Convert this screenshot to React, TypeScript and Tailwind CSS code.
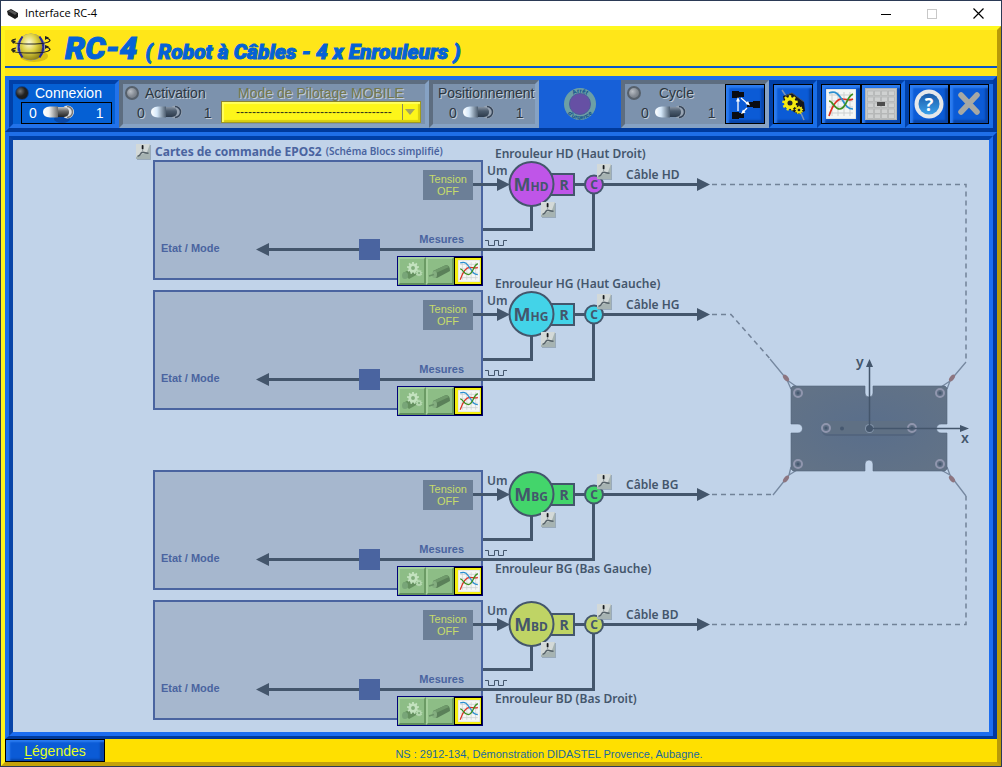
import React, { useState } from "react";

const INK = "#44566c";

type Winder = {
  code: "HD" | "HG" | "BG" | "BD";
  title: string;
  color: string;
  titleY: number;
  gap: string;
};

const winders: Winder[] = [
  { code: "HD", title: "Enrouleur HD (Haut Droit)", color: "#bf55e8", titleY: -2, gap: "" },
  { code: "HG", title: "Enrouleur HG (Haut Gauche)", color: "#43d3e8", titleY: -2, gap: "" },
  { code: "BG", title: "Enrouleur BG (Bas Gauche)", color: "#43d56b", titleY: 103, gap: "mt-[50px]" },
  { code: "BD", title: "Enrouleur BD (Bas Droit)", color: "#bfd465", titleY: 103, gap: "" },
];

function PdfIcon({ x, y }: { x: number; y: number }) {
  return (
    <g transform={`translate(${x} ${y})`}>
      <rect x="1" y="1" width="14" height="15" fill="#7f8f9d" opacity="0.6" />
      <rect width="14" height="15" fill="#d3d9d8" />
      <path d="M14 0V15H0V13L6 10L11 8Z" fill="#a6b3b2" />
      <path d="M6.600 1.800V4.500" stroke="#16191c" strokeWidth="1.800" strokeLinecap="round" />
      <path d="M6.600 5V7" stroke="#8c979b" strokeWidth="1" />
      <path d="M1.500 12.400Q4 11.500 5 9.200Q6 7.800 8 8.400Q10 9.200 12.500 9.200" stroke="#566269" strokeWidth="1.500" fill="none" />
    </g>
  );
}

function CurvesIcon({ size }: { size: number }) {
  return (
    <svg width={size} height={size} viewBox="0 0 30 30" aria-hidden="true">
      <rect width="30" height="30" fill="#f4f6f5" stroke="#d0d4d2" />
      <path d="M3 6H27M3 12H27M3 18H27M3 24H27M6 3V27M12 3V27M18 3V27M24 3V27" stroke="#cdd0cf" strokeWidth="1" />
      <path d="M3 27C6 18 10 9 17 10C21 10 23 12 27 10" stroke="#dd3022" strokeWidth="1.700" fill="none" />
      <path d="M3 4C10 1 13 6 17 12C20 17 22 20 27 20" stroke="#2a8fd0" strokeWidth="1.700" fill="none" />
      <path d="M3 12C7 12 8 20 14 20C21 19 20 8 27 5" stroke="#3c8f1f" strokeWidth="1.700" fill="none" />
    </svg>
  );
}

const gearTeeth = [0, 40, 80, 120, 160, 200, 240, 280, 320];

function Gear({ x, y, r, color, hole }: { x: number; y: number; r: number; color: string; hole: string }) {
  return (
    <g transform={`translate(${x} ${y})`}>
      {gearTeeth.map((a) => (
        <rect key={a} x={-r * 0.2} y={-r * 1.3} width={r * 0.4} height={r * 0.6} fill={color} transform={`rotate(${a})`} />
      ))}
      <circle r={r} fill={color} />
      <circle r={r * 0.42} fill={hole} />
    </g>
  );
}

function MotorBody() {
  return (
    <>
      <path d="M5 12L18 6Q22 6 22 12L9 19Q5 19 5 12Z" fill="#5a8059" />
      <path d="M5 12L18 6L21 8L9 13.500Z" fill="#6f9a6b" />
      <ellipse cx="6.500" cy="15.500" rx="2.500" ry="3.500" fill="#84ae80" />
      <path d="M1 17L6 15.500" stroke="#6a9468" strokeWidth="1.500" />
    </>
  );
}

function CardTools({ code }: { code: string }) {
  return (
    <div className="absolute -right-0.5 -bottom-2 z-10 flex border border-[#02027a] bg-black">
      <button type="button" aria-label={`Paramètres ${code}`} className="h-7 w-7 border-2 border-[#a4cf9c] border-r-[#6b9a64] border-b-[#5f8f5a] bg-[#8dbd86]">
        <svg width="24" height="24" viewBox="0 0 24 24" aria-hidden="true">
          <path d="M3 14L12 9L18 15L9 20Z" fill="#64905f" />
          <ellipse cx="5" cy="16.500" rx="3" ry="3.500" fill="#78a578" />
          <Gear x={13} y={9} r={4.6} color="#c3e2bf" hole="#7fae7b" />
          <Gear x={19} y={14} r={2.6} color="#b5d8b0" hole="#7fae7b" />
        </svg>
      </button>
      <button type="button" aria-label={`Moteur ${code}`} className="h-7 w-7 border-2 border-[#a4cf9c] border-r-[#6b9a64] border-b-[#5f8f5a] bg-[#8dbd86]">
        <svg width="24" height="24" viewBox="0 0 24 24" aria-hidden="true">
          <MotorBody />
        </svg>
      </button>
      <button type="button" aria-label={`Courbes ${code}`} className="flex h-7 w-7 items-center justify-center border-l border-black bg-[#f4ee10] outline-1 -outline-offset-1 outline-black">
        <CurvesIcon size={22} />
      </button>
    </div>
  );
}

function WinderUnit({ w }: { w: Winder }) {
  return (
    <section className={`relative h-[130px] pl-[140px] ${w.gap}`} aria-label={w.title}>
      <div className="relative h-[120px] w-[330px] border-2 border-[#4a64a0] bg-[#a6b7ce] text-[11px] leading-3">
        <div className="flex justify-end pt-2 pr-2">
          <div className="flex h-[30px] w-[50px] items-center justify-center bg-[#6c7f97] text-center text-[#c6dc6a]">
            Tension
            <br />
            OFF
          </div>
        </div>
        <div className="mt-[33px] flex items-start justify-between pr-[17px] pl-1.5 font-bold text-[#4a64a0]">
          <span className="pt-[9px]">Etat / Mode</span>
          <span>Mesures</span>
        </div>
        <CardTools code={w.code} />
      </div>
      <svg className="pointer-events-none absolute top-0 left-0 overflow-visible" width="700" height="130" viewBox="13 0 700 130">
        <g fill={INK}>
          <rect x="473" y="23" width="26" height="3" />
          <path d="M497 18L510 24.500L497 31Z" />
          <rect x="266" y="88" width="329" height="3" />
          <path d="M256 89.500L269 83V96Z" />
          <rect x="592" y="30" width="3" height="61" />
          <rect x="530" y="45" width="3" height="26" />
          <rect x="483" y="68" width="50" height="3" />
          <rect x="574" y="23" width="124" height="3" />
          <path d="M697 18L710 24.500L697 31Z" />
        </g>
        <rect x="359" y="79" width="21" height="21" fill="#4a64a0" />
        <path d="M485 80.500H488.500V85.500H494.500V80.500H498.500V85.500H503.500V80.500H507" fill="none" stroke={INK} />
        <rect x="551" y="14" width="23" height="21" fill={w.color} stroke={INK} strokeWidth="2" />
        <circle cx="531.500" cy="24" r="22" fill={w.color} stroke={INK} strokeWidth="2" />
        <circle cx="594" cy="24.500" r="9" fill={w.color} stroke={INK} strokeWidth="2" />
        <g fill={INK} fontFamily='"Noto Sans", "Open Sans", sans-serif' fontWeight="700" textAnchor="middle">
          <text x="531" y="31" fontSize="18">
            M<tspan fontSize="12">{w.code}</tspan>
          </text>
          <text x="564" y="30" fontSize="14">R</text>
          <text x="594" y="29" fontSize="12">C</text>
        </g>
        <g fill={INK} fontFamily='"Noto Sans", "Open Sans", sans-serif' fontWeight="600" fontSize="12">
          <text x="487" y="15">Um</text>
          <text x="626" y="19">Câble {w.code}</text>
          <text x="495" y={w.titleY}>{w.title}</text>
        </g>
        <PdfIcon x={541} y={42} />
        <PdfIcon x={597} y={4} />
      </svg>
    </section>
  );
}

function Bolt({ x, y }: { x: number; y: number }) {
  return (
    <g>
      <circle cx={x} cy={y} r="4" fill="#5e6f84" stroke="#9096ae" strokeWidth="2" />
      <circle cx={x} cy={y} r="1.500" fill="#465870" />
    </g>
  );
}

function Hook({ d, cx, cy, angle }: { d: string; cx: number; cy: number; angle: number }) {
  return (
    <g>
      <path d={d} fill="none" stroke="#7688a0" strokeWidth="1.300" />
      <ellipse cx={cx} cy={cy} rx="4" ry="2.200" fill="#8d7580" transform={`rotate(${angle} ${cx} ${cy})`} />
    </g>
  );
}

function Platform() {
  return (
    <svg className="shrink-0" width="276" height="592" viewBox="713 140 276 592" role="img" aria-label="Plateforme mobile" overflow="visible">
      <defs>
        <radialGradient id="plate" cx="0.5" cy="0.5" r="0.7">
          <stop offset="0" stopColor="#596e8b" />
          <stop offset="1" stopColor="#637386" />
        </radialGradient>
      </defs>
      <g fill="none" stroke="#728298" strokeWidth="1.500" strokeDasharray="5 4">
        <path d="M712 184.500H966V362" />
        <path d="M712 314.500H731L772 361" />
        <path d="M712 494.500H773" />
        <path d="M712 624.500H966V496" />
      </g>
      <Hook d="M770 359L789 382M787 380L791 389M787 380L797 387" cx={786} cy={378} angle={50} />
      <Hook d="M966 362L950 381M950 381L947 389M950 381L941 387" cx={952} cy={378} angle={-52} />
      <Hook d="M773 495L789 475M789 475L791 467M789 475L797 470" cx={786} cy={479} angle={-52} />
      <Hook d="M966 496L950 475M950 475L947 467M950 475L941 470" cx={952} cy={479} angle={50} />
      <path
        d="M793 386H865V393A4 4 0 0 0 873 393V386H945L947 388V424H941A4 4 0 0 0 941 433H947V469L945 471H873V464A4 4 0 0 0 865 464V471H793L791 469V433H798A4 4 0 0 0 798 424H791V388Z"
        fill="url(#plate)"
        stroke="#55667c"
        strokeWidth="0.600"
      />
      <rect x="822" y="423" width="94" height="13" rx="5" fill="#53657e" />
      <rect x="822" y="421" width="94" height="13" rx="5" fill="#5f7084" />
      <Bolt x={798} y={393} />
      <Bolt x={940} y={393} />
      <Bolt x={798} y={464} />
      <Bolt x={940} y={464} />
      <Bolt x={826} y={428} />
      <Bolt x={912} y={428} />
      <circle cx="842" cy="428.500" r="2" fill="#465870" />
      <circle cx="869.500" cy="428.500" r="4.500" fill="#8495ab" />
      <path d="M869.500 428.500V366M869.500 428.500H962" stroke={INK} strokeWidth="1.500" />
      <circle cx="869.500" cy="428.500" r="3.500" fill={INK} />
      <path d="M869.500 359L873 367H866ZM969 428.500L960 425V432Z" fill={INK} />
      <g fill={INK} fontFamily='"Noto Sans", sans-serif' fontWeight="600" fontSize="14">
        <text x="856" y="367">y</text>
        <text x="961" y="443">x</text>
      </g>
    </svg>
  );
}

function Led({ dark }: { dark?: boolean }) {
  return (
    <span
      className={
        dark
          ? "block size-3.5 rounded-full border border-[#0b3f8c] bg-[radial-gradient(circle_at_35%_35%,#777,#222_45%,#151515)]"
          : "block size-3.5 rounded-full border-2 border-[#56606b] bg-[radial-gradient(circle_at_35%_35%,#b9bec4,#858c95_50%,#6b727b)]"
      }
    />
  );
}

function ToggleSwitch({ id, bright }: { id: string; bright?: boolean }) {
  const [on, setOn] = useState(false);
  return (
    <span className="relative block h-4 w-8">
      <input
        id={id}
        type="checkbox"
        checked={on}
        onChange={() => setOn(!on)}
        className="absolute inset-0 z-10 size-full cursor-pointer opacity-0"
      />
      <svg width="32" height="16" viewBox="0 0 32 16" className={on ? "-scale-x-100 overflow-visible" : "overflow-visible"} aria-hidden="true">
        <defs>
          <linearGradient id={`${id}-bar`} x1="0" y1="0" x2="0" y2="1">
            <stop offset="0" stopColor={bright ? "#c4c4c4" : "#8693a3"} />
            <stop offset="0.4" stopColor={bright ? "#6b6b6b" : "#4c5c6e"} />
            <stop offset="1" stopColor={bright ? "#222" : "#2c3a4b"} />
          </linearGradient>
          <linearGradient id={`${id}-knob`} x1="0" y1="0" x2="1" y2="0">
            <stop offset="0" stopColor="#fff" />
            <stop offset="0.4" stopColor={bright ? "#f2f2f2" : "#d6e9fb"} />
            <stop offset="1" stopColor={bright ? "#6b6b6b" : "#4c5c6e"} />
          </linearGradient>
        </defs>
        {bright && <ellipse cx="19" cy="14" rx="8" ry="4" fill="#0a3f94" opacity="0.7" />}
        <circle cx="24.500" cy="7" r="6.500" fill={bright ? "#e2e2e2" : "#98a4b3"} />
        <path d="M24 1.500A5.500 5.500 0 0 1 24 12.500" fill="none" stroke={bright ? "#777" : "#37465a"} strokeWidth="1.500" />
        <path d="M6 2H21Q26 2.500 26 7T21 12H6Z" fill={`url(#${id}-bar)`} />
        <path d="M7 1.500H15V12.500H7Q0 12 0 7T7 1.500Z" fill={`url(#${id}-knob)`} />
      </svg>
    </span>
  );
}

const insetGrey =
  "border-4 border-t-[#5d6d80] border-l-[#5d6d80] border-r-[#86a2c4] border-b-[#86a2c4] bg-[#7c92ad] text-[#2c3640] [text-shadow:1px_1px_0_#c3ced9]";

function SwitchRow({ id, bright }: { id: string; bright?: boolean }) {
  return (
    <div className="flex h-[22px] items-center">
      <span>0</span>
      <span className="mr-[21px] ml-1.5">
        <ToggleSwitch id={id} bright={bright} />
      </span>
      <span>1</span>
    </div>
  );
}

function ToolButton({ label, children }: { label: string; children: React.ReactNode }) {
  return (
    <button
      type="button"
      aria-label={label}
      className="flex size-10 shrink-0 items-center justify-center border border-black bg-[#0b5bd6] p-0 shadow-[inset_3px_3px_2px_#2c7cf0,inset_-3px_-3px_2px_#0846ac]"
    >
      {children}
    </button>
  );
}

const toolGroup = "flex border-4 border-t-[#0040a8] border-l-[#0040a8] border-r-[#1a6ee8] border-b-[#1a6ee8]";

function Toolbar() {
  return (
    <div className="border-4 border-t-[#1f6fe8] border-r-[#0038a0] border-b-[#003a9c] border-l-[#1f6fe8] bg-[#1760d8] text-sm leading-4">
      <div className="flex h-12">
        <div className="w-[110px] shrink-0 border-4 border-t-[#0040a8] border-l-[#0040a8] border-r-[#2272ea] border-b-[#2272ea] bg-[#0560d4] text-white">
          <div className="flex h-[18px] items-center gap-1.5 pl-0.5">
            <Led dark />
            <label htmlFor="connexion">Connexion</label>
          </div>
          <div className="ml-2 w-[91px] border border-black pl-[7px]">
            <div className="-my-px">
              <SwitchRow id="connexion" bright />
            </div>
          </div>
        </div>

        <div className={`flex w-[310px] shrink-0 ${insetGrey}`}>
          <div className="w-[98px]">
            <div className="flex h-[18px] items-center gap-1.5 pl-0.5">
              <Led />
              <label htmlFor="activation">Activation</label>
            </div>
            <div className="pl-[14px]">
              <SwitchRow id="activation" />
            </div>
          </div>
          <div className="w-[200px]">
            <label htmlFor="mode" className="block h-[17px] text-center leading-[18px] whitespace-nowrap text-[#74774c]">
              Mode de Pilotage MOBILE
            </label>
            <div className="relative">
              <select
                id="mode"
                className="block h-[22px] w-full appearance-none rounded-none border border-t-[#8b8430] border-l-[#8b8430] border-r-[#a09a20] border-b-[#a09a20] bg-[#fdf61a] pl-[14px] text-xs text-[#33331a] shadow-[inset_2px_2px_1px_#ffff60,inset_-2px_-2px_1px_#d9cf10]"
              >
                <option>---------------------------------------</option>
              </select>
              <svg className="pointer-events-none absolute top-[3px] right-1" width="16" height="16" viewBox="0 0 16 16" aria-hidden="true">
                <path d="M1.500 0V16" stroke="#8a8a60" />
                <path d="M4 5H14L9 11Z" fill="#a4a460" />
              </svg>
            </div>
          </div>
        </div>

        <div className={`w-[110px] shrink-0 ${insetGrey}`}>
          <label htmlFor="positionnement" className="block h-[18px] pl-[5px] leading-[19px]">
            Positionnement
          </label>
          <div className="pl-4">
            <SwitchRow id="positionnement" />
          </div>
        </div>

        <div className="flex flex-1 items-center justify-center">
          <button type="button" aria-label="Arrêt d'urgence" className="rounded-full">
            <svg width="32" height="32" viewBox="0 0 32 32" aria-hidden="true">
              <defs>
                <path id="stopTop" d="M4.700 16A11.300 11.300 0 0 1 27.300 16" />
                <path id="stopBottom" d="M0.500 16A15.500 15.500 0 0 0 31.500 16" />
              </defs>
              <circle cx="16" cy="16" r="16" fill="#6c9fa6" />
              <circle cx="16" cy="16" r="10.500" fill="#6650a4" stroke="#4c5c9c" />
              <g fill="#0f4f8c" fontFamily='"Liberation Sans", sans-serif' fontWeight="700" fontSize="6" textAnchor="middle">
                <text>
                  <textPath href="#stopTop" startOffset="50%">Arrêt</textPath>
                </text>
                <text>
                  <textPath href="#stopBottom" startOffset="50%">d'urgence</textPath>
                </text>
              </g>
            </svg>
          </button>
        </div>

        <div className={`flex w-[148px] shrink-0 justify-between ${insetGrey}`}>
          <div>
            <div className="flex h-[18px] items-center gap-[18px] pl-0.5">
              <Led />
              <label htmlFor="cycle">Cycle</label>
            </div>
            <div className="pl-4">
              <SwitchRow id="cycle" />
            </div>
          </div>
          <ToolButton label="Trajectoire">
            <svg width="36" height="36" viewBox="0 0 36 36" aria-hidden="true">
              <path d="M5 5H12V6H17V11H12V12H5ZM5 26H12V27H17V32H12V33H5ZM33 15H26V16H20V21H26V22H33Z" fill="#0a0c12" />
              <path d="M11 25V14M14 12L21 18M20 22L16 26" stroke="#fff" strokeWidth="1.300" />
              <path d="M11 11L13 15.500H9ZM23 19.500L18.500 18L21 15ZM14 28L16 23.500L18.500 26.500Z" fill="#fff" />
            </svg>
          </ToolButton>
        </div>

        <div className={toolGroup}>
          <ToolButton label="Paramètres">
            <svg width="34" height="34" viewBox="0 0 34 34" aria-hidden="true">
              <path d="M6 3L12 12M24 24L28 33" stroke="#7d93b5" strokeWidth="1.500" />
              <path d="M7 9L16 6L28 15L29 24L22 27L9 20Z" fill="#16181c" />
              <path d="M9 9L16 6L28 15" stroke="#4c5055" fill="none" />
              <Gear x={14} y={16} r={6} color="#f5ea10" hole="#23262a" />
              <Gear x={23} y={23} r={3.2} color="#e8dc10" hole="#23262a" />
            </svg>
          </ToolButton>
        </div>

        <div className={toolGroup}>
          <ToolButton label="Courbes">
            <CurvesIcon size={30} />
          </ToolButton>
          <ToolButton label="Tableau">
            <svg width="32" height="32" viewBox="0 0 32 32" aria-hidden="true">
              <rect x="0.500" y="0.500" width="31" height="31" fill="#c6c8c8" stroke="#b2b4b4" />
              {[3, 9, 15, 21, 26].map((y) =>
                [2.5, 9.5, 16.5, 23.5].map((x) => (
                  <rect key={`${x}-${y}`} x={x} y={y} width="6" height="4.500" fill="#cfd1d1" stroke="#b0b2b2" strokeWidth="0.700" />
                )),
              )}
              <rect x="12" y="14" width="8" height="4" fill="#4c4c4c" />
            </svg>
          </ToolButton>
        </div>

        <div className="flex border-y-4 border-l-4 border-t-[#0040a8] border-l-[#0040a8] border-b-[#1a6ee8]">
          <ToolButton label="Aide">
            <svg width="32" height="32" viewBox="0 0 32 32" aria-hidden="true">
              <defs>
                <linearGradient id="help" x1="0" y1="0" x2="0" y2="1">
                  <stop offset="0" stopColor="#1a5aa8" />
                  <stop offset="1" stopColor="#3ba0ea" />
                </linearGradient>
              </defs>
              <circle cx="16" cy="16" r="14.500" fill="#e6e8ea" />
              <circle cx="16" cy="16" r="10.500" fill="url(#help)" />
              <text x="16" y="22.500" fontFamily='"Open Sans", sans-serif' fontSize="18" fontWeight="700" fill="#fff" textAnchor="middle">?</text>
            </svg>
          </ToolButton>
          <ToolButton label="Quitter">
            <svg width="28" height="28" viewBox="0 0 28 28" aria-hidden="true">
              <path d="M6 5L22 22M22 5L6 22" stroke="#a6a8a4" strokeWidth="5.500" strokeLinecap="round" />
            </svg>
          </ToolButton>
          <span className="w-1 bg-[#1a6ee8]" />
        </div>
      </div>
    </div>
  );
}

function GlobeLogo() {
  return (
    <svg width="44" height="34" viewBox="0 0 44 34" aria-hidden="true">
      <defs>
        <radialGradient id="globe" cx="0.4" cy="0.35" r="0.7">
          <stop offset="0" stopColor="#fdfbd8" />
          <stop offset="0.5" stopColor="#dcd042" />
          <stop offset="1" stopColor="#8a7c10" />
        </radialGradient>
      </defs>
      <ellipse cx="23" cy="25" rx="14" ry="6" fill="#b89c10" opacity="0.5" />
      <ellipse cx="20" cy="16" rx="14" ry="13" fill="#e0ddd4" stroke="#8d8f9d" />
      <path d="M12 5Q20 0.500 28 5Q35 16 28 27Q20 31 12 27Q6 16 12 5Z" fill="url(#globe)" />
      <path d="M11.500 5.500Q4 16 11.500 26.500M28.500 5.500Q36 16 28.500 26.500" stroke="#2a2a90" strokeWidth="2" fill="none" />
      <path d="M5 8Q0 9 1 10.500Q3 13 20 13Q37 13 39 9.500Q39 8 35 7" stroke="#222" strokeWidth="1.200" fill="none" />
      <path d="M5 17Q0 18 1 19.500Q3 22 20 22Q37 22 39 18.500Q39 17 35 16" stroke="#222" strokeWidth="1.200" fill="none" />
      <path d="M34 5V9L38 6.500ZM34 14V18L38 15.500ZM1 9L5 10L2 13ZM1 18L5 19L2 22Z" fill="#222" />
    </svg>
  );
}

export default function App() {
  return (
    <div className='flex min-h-screen flex-col border border-[#2b3a56] bg-[#ffe619] font-["Liberation_Sans",Arial,sans-serif]'>
      <header className="flex h-[25px] items-center bg-white pl-1.5">
        <svg width="12" height="12" viewBox="0 0 12 12" aria-hidden="true">
          <path d="M0 3L4 1L11 5V9L8 11L1 7Z" fill="#1e1e1e" />
          <path d="M1 3L4 2L10 5L8 7Z" fill="#555" />
        </svg>
        <h2 className='flex-1 pl-1.5 font-["Open_Sans","Noto_Sans",sans-serif] text-[11px] text-black'>Interface RC-4</h2>
        <button type="button" aria-label="Réduire" className="flex w-[46px] justify-center">
          <svg width="10" height="10" aria-hidden="true"><path d="M0 5.500H10" stroke="#000" /></svg>
        </button>
        <button type="button" aria-label="Agrandir" className="flex w-[46px] justify-center">
          <svg width="10" height="10" aria-hidden="true"><rect x="0.500" y="0.500" width="9" height="9" fill="none" stroke="#c8c8c8" /></svg>
        </button>
        <button type="button" aria-label="Fermer" className="flex w-[46px] justify-center">
          <svg width="11" height="11" aria-hidden="true"><path d="M0.500 0.500L10.500 10.500M10.500 0.500L0.500 10.500" stroke="#000" strokeWidth="1.200" /></svg>
        </button>
      </header>

      <div className="flex flex-1 flex-col border-4 border-t-[#fff81e] border-r-[#b89a08] border-b-[#c4a20a] border-l-[#fff31e]">
        <div className="flex h-9 items-center gap-2.5 pl-1.5 text-[#0562d6]">
          <GlobeLogo />
          <h1 className='flex items-baseline gap-2 pt-1 font-["Roboto","Liberation_Sans",sans-serif] font-black whitespace-nowrap italic [-webkit-text-stroke:1px_#0562d6]'>
            <span className="text-[32px] leading-9">RC-4</span>
            <span className="text-[21px] leading-9">( Robot à Câbles - 4 x Enrouleurs )</span>
          </h1>
        </div>
        <div className="mb-2 h-0.5 bg-[#0a55c8]" />

        <Toolbar />

        <main className="flex-1 border-4 border-t-[#1f6fe8] border-r-[#0038a0] border-b-[3px] border-b-[#003a9c] border-l-[#1f6fe8]">
          <div className="border-4 border-t-[#0040a8] border-r-[#1c6df0] border-b-[#1c6df0] border-l-[#0844a8] bg-[#c1d3e9]">
            <div className="flex">
              <div className="w-[700px] shrink-0">
                <h3 className='flex h-5 items-center gap-1 pt-[3px] pl-[123px] font-["Noto_Sans",Verdana,sans-serif] text-xs font-bold whitespace-nowrap text-[#4a64a0]'>
                  <svg width="15" height="16" viewBox="0 0 15 16" aria-hidden="true">
                    <PdfIcon x={0} y={0} />
                  </svg>
                  Cartes de commande EPOS2
                  <span className="text-[10px] font-semibold">(Schéma Blocs simplifié)</span>
                </h3>
                {winders.map((w) => (
                  <WinderUnit key={w.code} w={w} />
                ))}
                <div className="h-0.5" />
              </div>
              <Platform />
            </div>
          </div>
        </main>

        <footer className="flex h-[23px] items-stretch bg-[#ffe000]">
          <button
            type="button"
            className="w-[100px] border border-black bg-[#0b5bd6] text-sm leading-5 text-[#e6ff1e] shadow-[inset_4px_2px_2px_#2c7cf0,inset_-4px_-2px_2px_#0846ac]"
          >
            <span className="underline underline-offset-2">L</span>égendes
          </button>
          <p className="flex-1 pt-[7px] pr-1 text-center text-[11px] leading-4 text-[#1c6a9a]">
            NS : 2912-134, Démonstration DIDASTEL Provence, Aubagne.
          </p>
        </footer>
      </div>
    </div>
  );
}
